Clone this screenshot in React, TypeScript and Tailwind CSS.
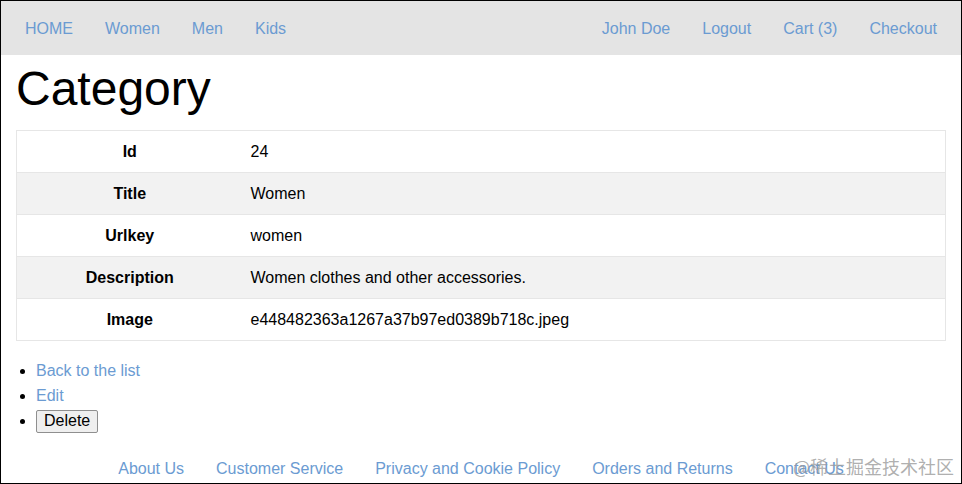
const navLeft = ["HOME", "Women", "Men", "Kids"];
const navRight = ["John Doe", "Logout", "Cart (3)", "Checkout"];

const rows = [
  { label: "Id", value: "24" },
  { label: "Title", value: "Women" },
  { label: "Urlkey", value: "women" },
  { label: "Description", value: "Women clothes and other accessories." },
  { label: "Image", value: "e448482363a1267a37b97ed0389b718c.jpeg" },
];

const footerLinks = [
  "About Us",
  "Customer Service",
  "Privacy and Cookie Policy",
  "Orders and Returns",
  "Contact Us",
];

export default function App() {
  return (
    <div
      className="relative h-[484px] w-[962px] overflow-hidden border border-black bg-white text-[16px] text-black"
      style={{ fontFamily: '"Liberation Sans", Arial, sans-serif' }}
    >
      <nav className="flex h-[54px] items-center justify-between bg-[#e4e4e4] px-2 pt-[2px]">
        <div className="flex">
          {navLeft.map((item) => (
            <a key={item} href="#" className="px-4 text-[#6b9bd2]">
              {item}
            </a>
          ))}
        </div>
        <div className="flex">
          {navRight.map((item) => (
            <a key={item} href="#" className="px-4 text-[#6b9bd2]">
              {item}
            </a>
          ))}
        </div>
      </nav>

      <main className="px-[15px]">
        <h1 className="mt-[6px] mb-[14px] text-[48px] leading-[55px]">Category</h1>

        <table className="w-full border-collapse border border-[#e6e6e6]">
          <tbody>
            {rows.map((row, i) => (
              <tr
                key={row.label}
                className={`h-[42px] border-t border-[#e6e6e6] ${i % 2 === 1 ? "bg-[#f2f2f2]" : "bg-white"}`}
              >
                <th className="w-[226px] text-center font-bold">{row.label}</th>
                <td className="pl-[8px] text-left">{row.value}</td>
              </tr>
            ))}
          </tbody>
        </table>

        <ul className="mt-[17px] list-disc pl-[20px]">
          <li className="leading-[25px]">
            <a href="#" className="text-[#6b9bd2]">Back to the list</a>
          </li>
          <li className="leading-[25px]">
            <a href="#" className="text-[#6b9bd2]">Edit</a>
          </li>
          <li className="leading-[25px]">
            <button className="h-[23px] rounded-[2px] border border-[#8f8f8f] bg-[#efefef] px-[7px] leading-[20px]">
              Delete
            </button>
          </li>
        </ul>

        <footer className="mt-[26px] flex justify-center">
          {footerLinks.map((item) => (
            <a key={item} href="#" className="px-4 leading-[20px] text-[#6b9bd2]">
              {item}
            </a>
          ))}
        </footer>
      </main>

      <span
        className="absolute right-[7px] bottom-[3px] text-[18px] text-[#9a9a9a]/80"
        style={{ fontFamily: '"Noto Sans CJK SC", sans-serif' }}
      >
        @稀土掘金技术社区
      </span>
    </div>
  );
}
